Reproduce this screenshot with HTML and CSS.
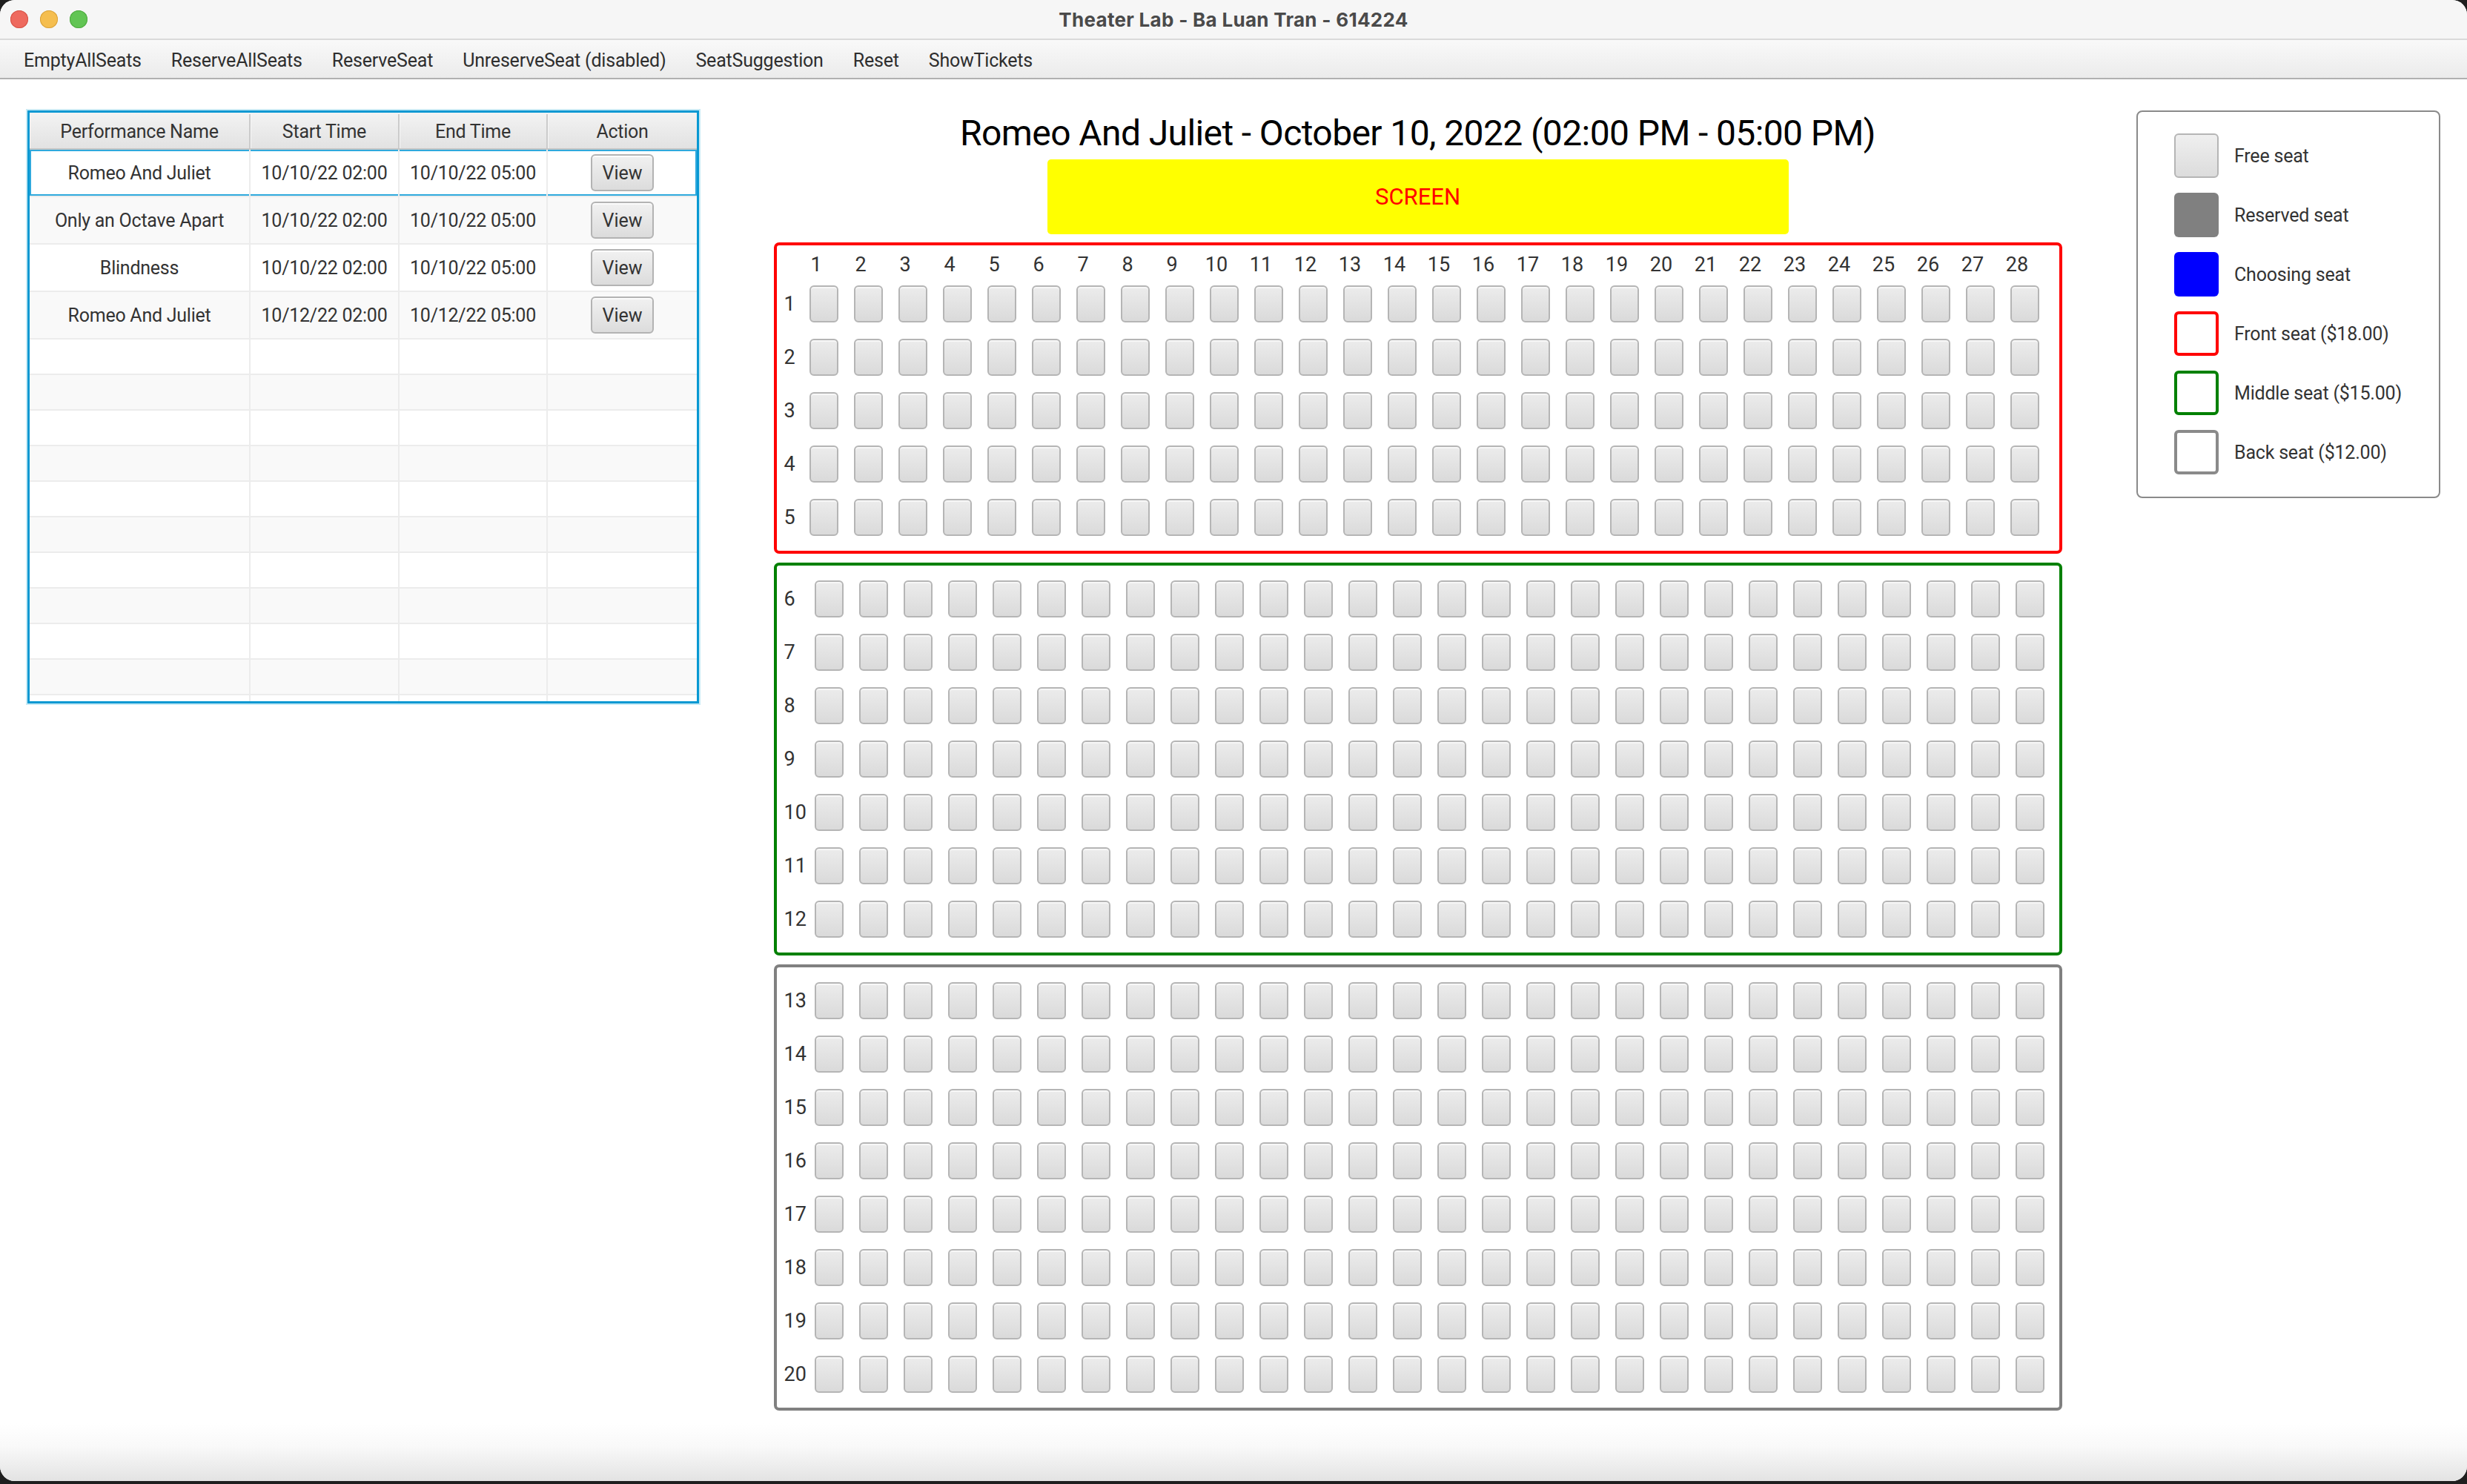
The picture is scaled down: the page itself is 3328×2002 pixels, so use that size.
FILE: index.html
```html
<!DOCTYPE html>
<html lang="en">
<head>
<meta charset="utf-8">
<title>Theater Lab - Ba Luan Tran - 614224</title>
<link rel="stylesheet" href="styles.css">
</head>
<body>
<div class="window">
  <header class="titlebar">
    <div class="traffic">
      <span class="light light--close"></span>
      <span class="light light--min"></span>
      <span class="light light--max"></span>
    </div>
    <h1 class="titlebar__text">Theater Lab - Ba Luan Tran - 614224</h1>
  </header>
  <nav class="menubar">
    <span class="menu-item">EmptyAllSeats</span>
    <span class="menu-item">ReserveAllSeats</span>
    <span class="menu-item">ReserveSeat</span>
    <span class="menu-item">UnreserveSeat (disabled)</span>
    <span class="menu-item">SeatSuggestion</span>
    <span class="menu-item">Reset</span>
    <span class="menu-item">ShowTickets</span>
  </nav>
  <main class="main">
    <section class="table">
      <div class="trow thead">
        <div class="th">Performance Name</div>
        <div class="th">Start Time</div>
        <div class="th">End Time</div>
        <div class="th">Action</div>
      </div>
      <div class="trow trow--filled trow--focused">
        <div class="td">Romeo And Juliet</div>
        <div class="td">10/10/22 02:00</div>
        <div class="td">10/10/22 05:00</div>
        <div class="td"><button class="btn" type="button">View</button></div>
      </div>
      <div class="trow trow--filled trow--odd">
        <div class="td">Only an Octave Apart</div>
        <div class="td">10/10/22 02:00</div>
        <div class="td">10/10/22 05:00</div>
        <div class="td"><button class="btn" type="button">View</button></div>
      </div>
      <div class="trow trow--filled">
        <div class="td">Blindness</div>
        <div class="td">10/10/22 02:00</div>
        <div class="td">10/10/22 05:00</div>
        <div class="td"><button class="btn" type="button">View</button></div>
      </div>
      <div class="trow trow--filled trow--odd">
        <div class="td">Romeo And Juliet</div>
        <div class="td">10/12/22 02:00</div>
        <div class="td">10/12/22 05:00</div>
        <div class="td"><button class="btn" type="button">View</button></div>
      </div>
      <div class="trow"><div class="td"></div><div class="td"></div><div class="td"></div><div class="td"></div></div>
      <div class="trow trow--odd"><div class="td"></div><div class="td"></div><div class="td"></div><div class="td"></div></div>
      <div class="trow"><div class="td"></div><div class="td"></div><div class="td"></div><div class="td"></div></div>
      <div class="trow trow--odd"><div class="td"></div><div class="td"></div><div class="td"></div><div class="td"></div></div>
      <div class="trow"><div class="td"></div><div class="td"></div><div class="td"></div><div class="td"></div></div>
      <div class="trow trow--odd"><div class="td"></div><div class="td"></div><div class="td"></div><div class="td"></div></div>
      <div class="trow"><div class="td"></div><div class="td"></div><div class="td"></div><div class="td"></div></div>
      <div class="trow trow--odd"><div class="td"></div><div class="td"></div><div class="td"></div><div class="td"></div></div>
      <div class="trow"><div class="td"></div><div class="td"></div><div class="td"></div><div class="td"></div></div>
      <div class="trow trow--odd"><div class="td"></div><div class="td"></div><div class="td"></div><div class="td"></div></div>
      <div class="trow"><div class="td"></div><div class="td"></div><div class="td"></div><div class="td"></div></div>
    </section>

    <section class="stage">
      <h2 class="stage__title">Romeo And Juliet - October 10, 2022 (02:00 PM - 05:00 PM)</h2>
      <div class="screen">SCREEN</div>
      <div class="seat-grid section--front" data-from="1" data-to="5" data-header="true"></div>
      <div class="seat-grid section--middle" data-from="6" data-to="12"></div>
      <div class="seat-grid section--back" data-from="13" data-to="20"></div>
    </section>

    <aside class="legend">
      <div class="legend__item"><span class="swatch swatch--free"></span><span>Free seat</span></div>
      <div class="legend__item"><span class="swatch swatch--reserved"></span><span>Reserved seat</span></div>
      <div class="legend__item"><span class="swatch swatch--choosing"></span><span>Choosing seat</span></div>
      <div class="legend__item"><span class="swatch swatch--front"></span><span>Front seat ($18.00)</span></div>
      <div class="legend__item"><span class="swatch swatch--middle"></span><span>Middle seat ($15.00)</span></div>
      <div class="legend__item"><span class="swatch swatch--back"></span><span>Back seat ($12.00)</span></div>
    </aside>
  </main>
  <div class="bottom-fade"></div>
</div>
<script src="app.js"></script>
</body>
</html>
```
FILE: styles.css
```css
* { box-sizing: border-box; margin: 0; padding: 0; }

html, body { width: 3328px; height: 2002px; }

body {
  background: #1f1f1f;
  font-family: "Roboto", "Inter", "Noto Sans", sans-serif;
  color: #333;
  overflow: hidden;
}

.window {
  width: 3328px;
  height: 1998px;
  background: #fff;
  border-radius: 20px;
  overflow: hidden;
  display: flex;
  flex-direction: column;
}

/* Title bar */
.titlebar {
  height: 54px;
  flex: none;
  background: #f6f6f6;
  border-bottom: 2px solid #dadada;
  display: flex;
  align-items: center;
  justify-content: center;
  position: relative;
}
.traffic {
  position: absolute;
  left: 14px;
  top: 14px;
  display: flex;
  gap: 16px;
}
.light {
  width: 24px;
  height: 24px;
  border-radius: 50%;
}
.light--close { background: #ee6a5f; box-shadow: inset 0 0 0 1px #d65347; }
.light--min { background: #f5be4f; box-shadow: inset 0 0 0 1px #d9a23b; }
.light--max { background: #62c554; box-shadow: inset 0 0 0 1px #4ea93f; }
.titlebar__text {
  font-family: "Inter", "Roboto", sans-serif;
  font-size: 26px;
  font-weight: 700;
  color: #4a4a4a;
  letter-spacing: 0.3px;
}

/* Menu bar */
.menubar {
  height: 53px;
  flex: none;
  display: flex;
  align-items: center;
  padding-left: 12px;
  padding-top: 3px;
  background: linear-gradient(#f9f9f9, #ebebeb);
  border-bottom: 2px solid #b0b0b0;
}
.menu-item {
  padding: 0 20px;
  font-size: 25px;
  letter-spacing: -0.2px;
  color: #2e2e2e;
}

/* Main */
.main {
  flex: 1;
  min-height: 0;
  display: flex;
  align-items: flex-start;
  padding: 42px 36px 0 37px;
}

/* Table */
.table {
  flex: none;
  width: 906px;
  height: 800px;
  border: 3px solid #0898d2;
  box-shadow: 0 0 0 2px rgba(3, 158, 211, 0.22);
  overflow: hidden;
  background: #fff;
}
.trow {
  display: grid;
  grid-template-columns: 298px 201px 200px 201px;
  height: 48px;
  border-bottom: 2px solid #ececec;
}
.trow--odd { background: #f9f9f9; }
.trow--filled { height: 64px; }
.trow--focused { box-shadow: inset 0 0 0 2px #2fa9dd; }
.thead {
  height: 50px;
  padding-top: 2px;
  background: linear-gradient(#f3f3f3, #e2e2e2);
  border-bottom: 2px solid #c6c6c6;
}
.th, .td {
  display: flex;
  align-items: center;
  justify-content: center;
  font-size: 25px;
  letter-spacing: -0.25px;
  color: #333;
  white-space: nowrap;
}
.th { border-right: 2px solid #cbcbcb; box-shadow: inset 1px 0 0 #f7f7f7; }
.td { border-right: 2px solid #ececec; }
.th:last-child, .td:last-child { border-right: none; }

.btn {
  width: 85px;
  height: 50px;
  font-family: inherit;
  font-size: 25px;
  color: #333;
  border: 2px solid #b3b3b3;
  border-radius: 6px;
  background: linear-gradient(#f1f1f1, #dcdcdc);
  box-shadow: inset 0 2px 0 rgba(255,255,255,0.7);
}

/* Stage */
.stage {
  flex: 1;
  display: flex;
  flex-direction: column;
  align-items: center;
}
.stage__title {
  font-size: 48px;
  font-weight: 400;
  line-height: 58px;
  padding-top: 2px;
  color: #000;
  letter-spacing: -0.6px;
  margin-bottom: 6px;
}
.screen {
  width: 1000px;
  height: 101px;
  background: #ffff00;
  border-radius: 5px;
  color: #ff0000;
  font-size: 31px;
  display: flex;
  align-items: center;
  justify-content: center;
  margin-bottom: 11px;
}

.seat-grid {
  --lw: 20px;
  width: 1738px;
  border: 4px solid #808080;
  border-radius: 7px;
  padding: 20px 0 20px 10px;
  display: grid;
  grid-template-columns: var(--lw) repeat(28, 39px);
  grid-auto-rows: 50px;
  column-gap: 21px;
  row-gap: 22px;
  margin-bottom: 12px;
}
.section--front { --lw: 13px; border-color: #ff0000; grid-template-rows: 12px; }
.section--middle { border-color: #008000; }
.section--back { border-color: #808080; }

.row-num {
  font-size: 27px;
  line-height: 50px;
  color: #333;
  white-space: nowrap;
}
.col-num {
  font-size: 27px;
  line-height: 12px;
  color: #333;
  white-space: nowrap;
  justify-self: center;
  margin-right: 20px;
}
.seat {
  width: 39px;
  height: 50px;
  border: 2px solid #b5b5b5;
  border-radius: 6px;
  background: linear-gradient(#ececec, #dadada);
  box-shadow: inset 0 2px 0 rgba(255,255,255,0.6);
}

/* Legend */
.legend {
  flex: none;
  width: 410px;
  border: 2px solid #8a8a8a;
  border-radius: 8px;
  padding: 29px 20px 30px 49px;
  display: flex;
  flex-direction: column;
  gap: 20px;
}
.legend__item {
  display: flex;
  align-items: center;
  gap: 21px;
  font-size: 25px;
  letter-spacing: -0.2px;
  color: #333;
  white-space: nowrap;
}
.swatch {
  flex: none;
  width: 60px;
  height: 60px;
  border-radius: 6px;
}
.swatch--free { border: 2px solid #b5b5b5; background: linear-gradient(#efefef, #dcdcdc); }
.swatch--reserved { background: #808080; }
.swatch--choosing { background: #0000ff; }
.swatch--front { border: 4px solid #ff0000; background: #fff; }
.swatch--middle { border: 4px solid #008000; background: #fff; }
.swatch--back { border: 4px solid #8a8a8a; background: #fff; }

.bottom-fade {
  flex: none;
  height: 78px;
  background: linear-gradient(#ffffff 0%, #f9f9f9 40%, #e3e3e3 100%);
}
```
FILE: app.js
```js
document.querySelectorAll('.seat-grid').forEach(function (grid) {
  var from = Number(grid.dataset.from);
  var to = Number(grid.dataset.to);
  var cols = 28;
  var frag = document.createDocumentFragment();
  if (grid.dataset.header === 'true') {
    frag.appendChild(document.createElement('span'));
    for (var c = 1; c <= cols; c++) {
      var h = document.createElement('span');
      h.className = 'col-num';
      h.textContent = c;
      frag.appendChild(h);
    }
  }
  for (var r = from; r <= to; r++) {
    var l = document.createElement('span');
    l.className = 'row-num';
    l.textContent = r;
    frag.appendChild(l);
    for (var s = 1; s <= cols; s++) {
      var b = document.createElement('button');
      b.type = 'button';
      b.className = 'seat';
      b.title = 'Row ' + r + ', Seat ' + s;
      frag.appendChild(b);
    }
  }
  grid.appendChild(frag);
});
```
